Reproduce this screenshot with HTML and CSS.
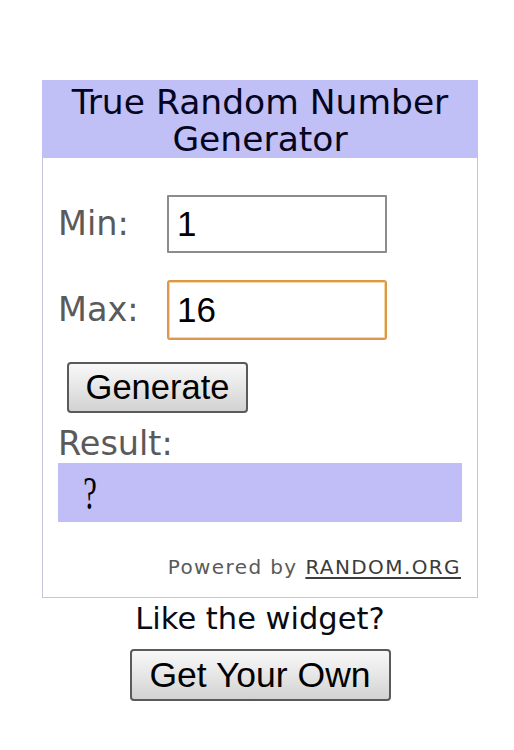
FILE: index.html
```html
<!DOCTYPE html>
<html>
<head>
<meta charset="utf-8">
<link rel="stylesheet" href="styles.css">
</head>
<body>
<div class="page">
  <div class="widget">
    <div class="widget-head">True Random Number<br>Generator</div>
    <div class="widget-body">
      <div class="fields">
        <label class="lbl">Min:</label>
        <input class="field" type="text" value="1">
        <label class="lbl">Max:</label>
        <input class="field field-focus" type="text" value="16">
      </div>
      <button class="btn btn-gen">Generate</button>
      <div class="lbl result-lbl">Result:</div>
      <div class="result"><span class="qmark">?</span></div>
      <div class="powered">Powered by <span class="link">RANDOM.ORG</span></div>
    </div>
  </div>
  <div class="promo">
    <div class="like">Like the widget?</div>
    <button class="btn btn-own">Get Your Own</button>
  </div>
</div>
</body>
</html>
```
FILE: styles.css
```css
html, body {
  margin: 0;
  padding: 0;
  background: #fff;
}
body {
  font-family: "DejaVu Sans", Verdana, sans-serif;
  color: #000;
}
.page {
  margin: 80px 0 0 42px;
  width: 436px;
}
.widget {
  width: 436px;
  box-sizing: border-box;
  border: 1px solid #c6c6dc;
  border-top: none;
}
.widget-head {
  background: #c0bff6;
  color: #05051e;
  height: 78px;
  box-sizing: border-box;
  padding-top: 4px;
  text-align: center;
  font-size: 34.5px;
  line-height: 37px;
  margin: 0 -1px;
}
.widget-body {
  padding: 37px 15px 18px 15px;
}
.fields {
  display: grid;
  grid-template-columns: 109px 220px;
  grid-template-rows: 58px 60px;
  row-gap: 27px;
  align-items: center;
}
.lbl {
  color: #5a5a5a;
  font-size: 33.5px;
  line-height: 38px;
}
.field {
  width: 220px;
  height: 58px;
  box-sizing: border-box;
  margin: 0;
  border: 2px solid #8c8c8c;
  border-radius: 1px;
  padding: 0 0 0 8px;
  font-family: "Liberation Sans", Arial, sans-serif;
  font-size: 35px;
  color: #000;
  background: #fff;
  outline: none;
}
.field-focus {
  height: 60px;
  border-color: #d9984a;
  border-radius: 3px;
  box-shadow: inset 0 0 0 1px #f6d8a4;
}
.btn {
  display: block;
  box-sizing: border-box;
  font-family: "Liberation Sans", Arial, sans-serif;
  color: #000;
  border: 2px solid #5a5a5a;
  border-radius: 4px;
  background: linear-gradient(#f8f8f8, #e6e6e6 50%, #d2d2d2);
  padding: 0;
  margin: 0;
}
.btn-gen {
  margin: 22px 0 0 9px;
  width: 181px;
  height: 51px;
  font-size: 34.5px;
  line-height: 47px;
}
.result-lbl {
  margin-top: 12px;
}
.result {
  height: 59px;
  background: #c0bdf7;
  padding-left: 24px;
  display: flex;
  align-items: center;
}
.qmark {
  display: inline-block;
  font-family: "Liberation Serif", "Times New Roman", serif;
  font-size: 36px;
  line-height: 1;
  color: #000;
  transform: scale(0.85, 1.3);
}
.powered {
  margin-top: 33px;
  text-align: right;
  padding-right: 1px;
  font-size: 20px;
  line-height: 24px;
  letter-spacing: 1.4px;
  color: #5a5a5a;
}
.link {
  color: #3c3c3c;
  text-decoration: underline;
  text-underline-offset: 3px;
}
.promo {
  display: flex;
  flex-direction: column;
  align-items: center;
}
.like {
  font-size: 30.5px;
  line-height: 36px;
  margin-top: 3px;
  color: #0a0a14;
}
.btn-own {
  margin-top: 12px;
  width: 261px;
  height: 52px;
  font-size: 35.5px;
  line-height: 48px;
}
```
